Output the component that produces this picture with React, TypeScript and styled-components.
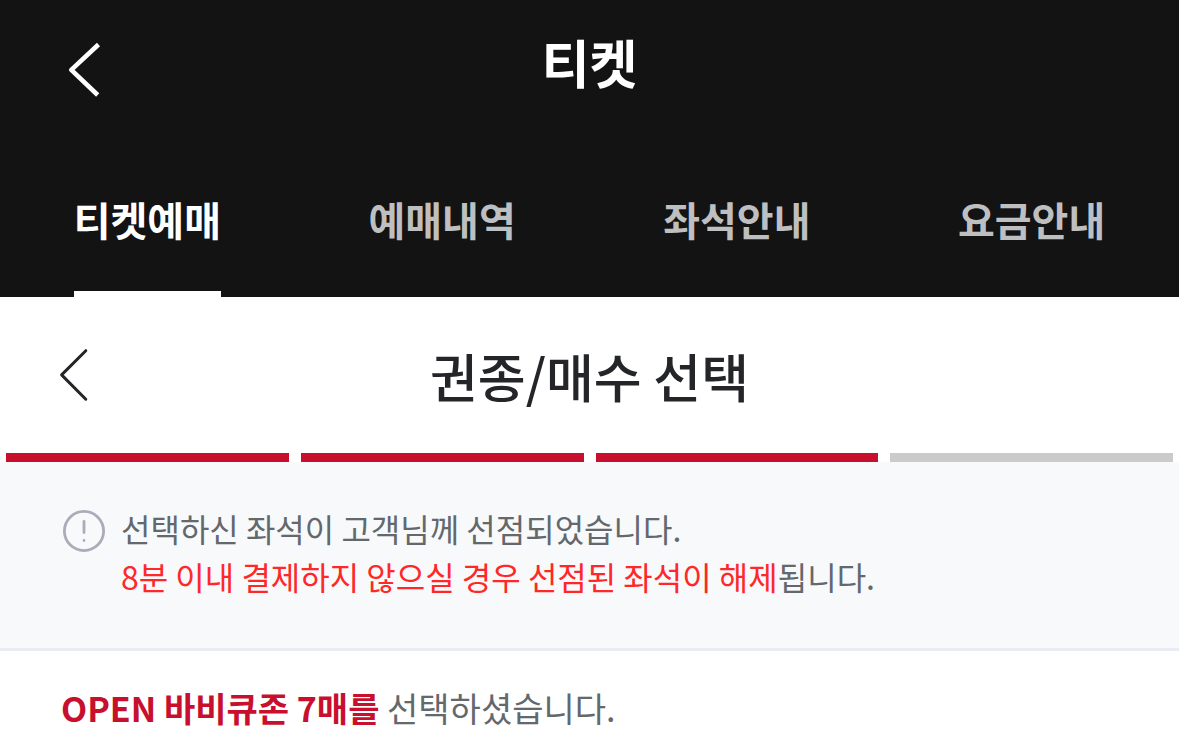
import React from "react";
import styled, { createGlobalStyle } from "styled-components";

const Global = createGlobalStyle`
  * { box-sizing: border-box; }
  body {
    margin: 0;
    background: #fff;
    font-family: "Noto Sans CJK KR", sans-serif;
    color: #242529;
  }
`;

const Header = styled.header`
  background: #131313;
  color: #fff;
`;

const TitleBar = styled.div`
  display: grid;
  grid-template-columns: 60px 1fr 60px;
  align-items: end;
  padding: 24px 54px 40px;
`;

const StepBar = styled(TitleBar)`
  align-items: center;
  padding: 41px 54px 39px;
`;

const BackButton = styled.button`
  display: flex;
  height: 60px;
  padding: 0;
  border: 0;
  background: none;
  color: inherit;
  cursor: pointer;
`;

const PageTitle = styled.h1`
  margin: 0;
  text-align: center;
  font-size: 52px;
  line-height: 76px;
  font-weight: 700;
`;

const StepTitle = styled(PageTitle)`
  font-weight: 500;
`;

const Tabs = styled.nav`
  display: grid;
  grid-template-columns: repeat(4, 1fr);
  justify-items: center;
`;

const Tab = styled.a<{ $active?: boolean }>`
  padding: 49px 0 42px;
  border-bottom: 6px solid ${(p) => (p.$active ? "#fff" : "transparent")};
  color: ${(p) => (p.$active ? "#fff" : "#bebfc0")};
  font-size: 40px;
  line-height: 60px;
  font-weight: 700;
  text-decoration: none;
`;

const Steps = styled.div`
  display: grid;
  grid-template-columns: repeat(4, 1fr);
  gap: 12px;
  padding: 0 6px;
`;

const Step = styled.div<{ $done: boolean }>`
  height: 9px;
  background: ${(p) => (p.$done ? "#c8102e" : "#cbcbcb")};
`;

const Notice = styled.section`
  display: flex;
  gap: 15px;
  padding: 42px 62px 48px;
  border-bottom: 3px solid #eaebf3;
  background: #f8f9fb;
  color: #63686c;
`;

const NoticeIcon = styled.svg`
  flex: none;
  margin-top: 5px;
`;

const NoticeText = styled.p`
  margin: 0;
  font-size: 32px;
  line-height: 48px;
`;

const Warning = styled.span`
  color: #ff2828;
`;

const Summary = styled.p`
  margin: 0;
  padding: 32px 61px 12px;
  color: #63686c;
  font-size: 34px;
  line-height: 50px;
`;

const Seats = styled.strong`
  color: #c8102e;
  font-weight: 700;
`;

const tabs = ["티켓예매", "예매내역", "좌석안내", "요금안내"];
const steps = [true, true, true, false];

export default function App() {
  return (
    <>
      <Global />
      <Header>
        <TitleBar>
          <BackButton aria-label="뒤로">
            <svg width="60" height="60" viewBox="0 0 60 60" fill="none" stroke="currentColor" strokeWidth="4.600" strokeLinejoin="round">
              <path d="M44.500 4.500L17.300 29.900L43.700 55" />
            </svg>
          </BackButton>
          <PageTitle>티켓</PageTitle>
        </TitleBar>
        <Tabs>
          {tabs.map((label, i) => (
            <Tab key={label} href="#" $active={i === 0}>
              {label}
            </Tab>
          ))}
        </Tabs>
      </Header>
      <main>
        <StepBar>
          <BackButton aria-label="이전 단계">
            <svg width="60" height="60" viewBox="0 0 60 60" fill="none" stroke="currentColor" strokeWidth="3" strokeLinecap="round" strokeLinejoin="round">
              <path d="M31.800 4.700L7.600 28.900L31.800 53.200" />
            </svg>
          </BackButton>
          <StepTitle as="h2">권종/매수 선택</StepTitle>
        </StepBar>
        <Steps>
          {steps.map((done, i) => (
            <Step key={i} $done={done} />
          ))}
        </Steps>
        <Notice>
          <NoticeIcon width="44" height="44" viewBox="0 0 44 44" fill="none" stroke="#a8adb9" strokeWidth="2.800" strokeLinecap="round">
            <circle cx="22" cy="22" r="19.600" />
            <path d="M22 12.500V23.500M22 31.500V31.600" />
          </NoticeIcon>
          <NoticeText>
            선택하신 좌석이 고객님께 선점되었습니다.
            <br />
            <Warning>8분 이내 결제하지 않으실 경우 선점된 좌석이 해제</Warning>됩니다.
          </NoticeText>
        </Notice>
        <Summary>
          <Seats>OPEN 바비큐존 7매를</Seats> 선택하셨습니다.
        </Summary>
      </main>
    </>
  );
}
